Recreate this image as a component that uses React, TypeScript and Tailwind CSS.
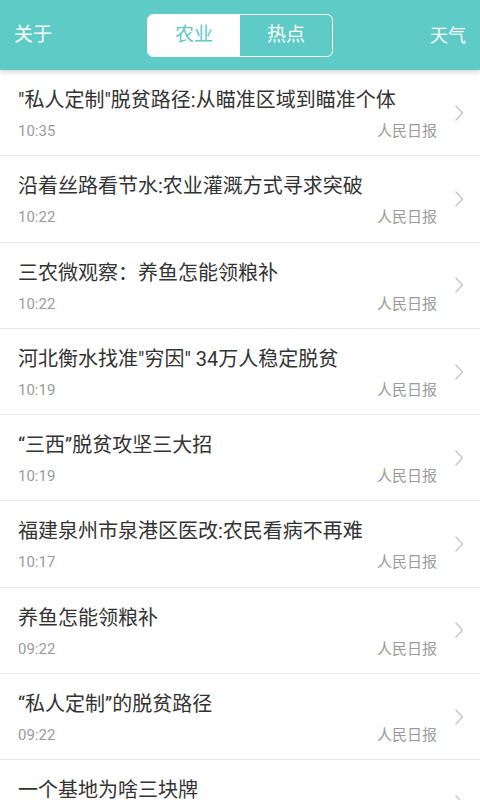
import React from 'react'

const news = [
  { title: '"私人定制"脱贫路径:从瞄准区域到瞄准个体', time: '10:35' },
  { title: '沿着丝路看节水:农业灌溉方式寻求突破', time: '10:22' },
  { title: '三农微观察：养鱼怎能领粮补', time: '10:22' },
  { title: '河北衡水找准"穷因" 34万人稳定脱贫', time: '10:19' },
  { title: '“三西”脱贫攻坚三大招', time: '10:19' },
  { title: '福建泉州市泉港区医改:农民看病不再难', time: '10:17' },
  { title: '养鱼怎能领粮补', time: '09:22' },
  { title: '“私人定制”的脱贫路径', time: '09:22' },
  { title: '一个基地为啥三块牌', time: '09:20' },
]

const Chevron = () => (
  <svg width="10" height="18" viewBox="0 0 10 18" className="shrink-0">
    <path d="M1.5 1.5 L8.5 9 L1.5 16.5" fill="none" stroke="#c4c4c4" strokeWidth="1.3" />
  </svg>
)

export default function App() {
  return (
    <div
      className="w-[480px] h-[800px] overflow-hidden bg-white"
      style={{ fontFamily: 'Roboto, "Noto Sans CJK SC", sans-serif' }}
    >
      <header className="relative z-10 h-[70px] bg-[#5ecbc7] grid grid-cols-[1fr_auto_1fr] items-center px-[14px] shadow-[0_2px_5px_rgba(0,0,0,0.18)]">
        <span className="text-white text-[19px]">关于</span>
        <div className="flex h-[43px] w-[186px] border-[1.5px] border-white rounded-[6px] overflow-hidden">
          <div className="flex-1 bg-white text-[#5ecbc7] text-[19px] flex items-center justify-center">农业</div>
          <div className="flex-1 text-white text-[19px] flex items-center justify-center">热点</div>
        </div>
        <span className="text-white text-[18px] justify-self-end">天气</span>
      </header>

      <ul>
        {news.map((item, i) => (
          <li key={i} className="h-[86.3px] border-b border-[#e6e6e6] flex items-center">
            <div className="flex-1 pl-[18px] pt-[16px] self-start">
              <div className="text-[20px] leading-[28px] text-[#333] whitespace-nowrap">{item.title}</div>
              <div className="mt-[7px] flex justify-between items-center text-[15px] leading-[20px] text-[#9b9b9b]">
                <span>{item.time}</span>
                <span>人民日报</span>
              </div>
            </div>
            <div className="ml-[17px] mr-[16px]">
              <Chevron />
            </div>
          </li>
        ))}
      </ul>
    </div>
  )
}
